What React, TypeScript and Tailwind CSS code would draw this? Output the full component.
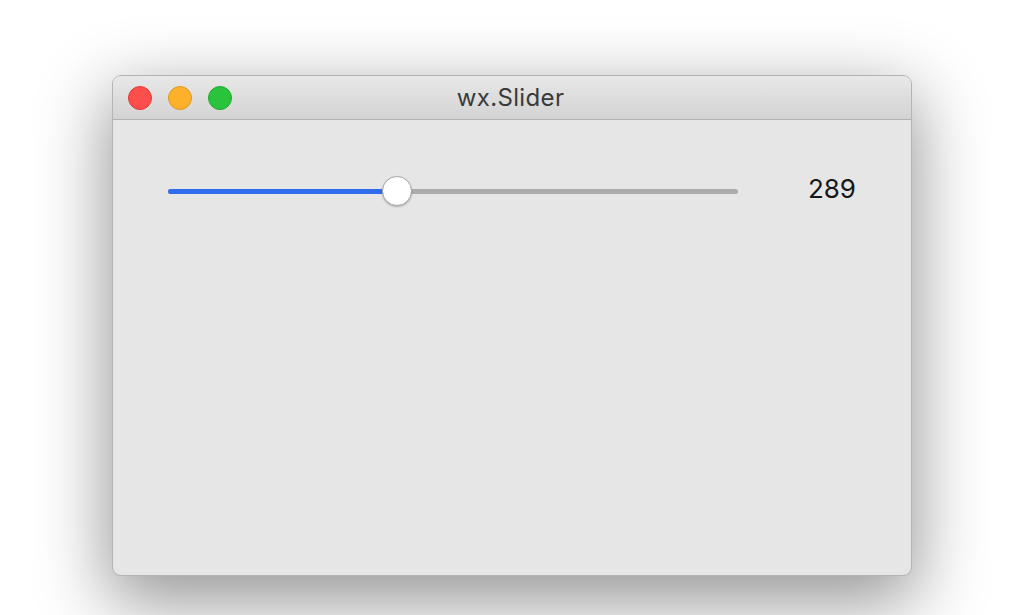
import React from "react";

export default function App() {
  return (
    <div className="w-[1024px] h-[615px] bg-white overflow-hidden pt-[75px] pl-[112px]" style={{ fontFamily: "Inter, 'Liberation Sans', sans-serif" }}>
      <div className="w-[800px] h-[501px] rounded-[9px] border border-[#b4b4b4] bg-[#e6e6e6] overflow-hidden flex flex-col shadow-[0_22px_70px_4px_rgba(0,0,0,0.42)]">
        <div className="relative h-[44px] shrink-0 bg-gradient-to-b from-[#e8e8e8] to-[#d3d3d3] border-b border-[#b3b3b3] flex items-center pl-[15px] gap-[16px]">
          <div className="w-[24px] h-[24px] rounded-full bg-[#fc4e4b] border border-[#de3b38]" />
          <div className="w-[24px] h-[24px] rounded-full bg-[#fdb12a] border border-[#dc9a1f]" />
          <div className="w-[24px] h-[24px] rounded-full bg-[#2ac33c] border border-[#1ea92e]" />
          <div className="absolute inset-0 flex items-center justify-center pointer-events-none">
            <span className="text-[24px] tracking-[0.015em] text-[#3a3a3a] leading-none pr-[3px]">wx.Slider</span>
          </div>
        </div>
        <div className="flex-1 px-[55px] pt-[56px]">
          <div className="flex items-center h-[30px]">
            <div className="relative w-[570px] h-[30px] flex items-center">
              <div className="w-full h-[5px] rounded-full bg-[#acacac]" />
              <div className="absolute left-0 top-[12.5px] w-[229px] h-[5px] rounded-full bg-[#2f6ded]" />
              <div className="absolute left-[214px] top-0 w-[30px] h-[30px] rounded-full bg-white border border-[#a8a8a8] shadow-[0_1px_2px_rgba(0,0,0,0.25)]" />
            </div>
            <span className="ml-auto text-[26px] leading-none text-[#161616] -mt-[5px]">289</span>
          </div>
        </div>
      </div>
    </div>
  );
}
